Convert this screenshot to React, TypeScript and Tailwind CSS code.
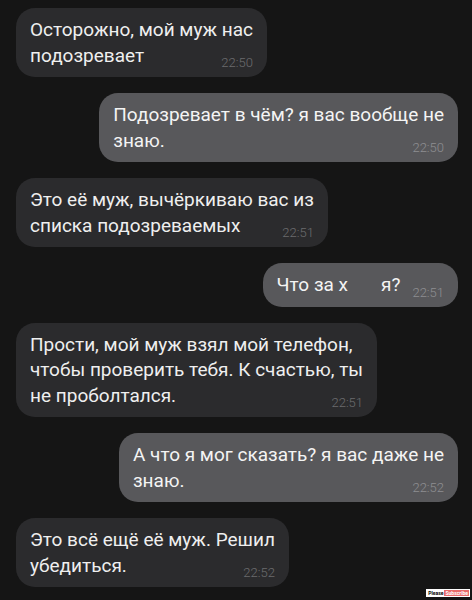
import React from 'react';

type Msg = {
    lines: string[];
    time: string;
    mine: boolean;
};

const messages: Msg[] = [
    { lines: ['Осторожно, мой муж нас', 'подозревает'], time: '22:50', mine: false },
    { lines: ['Подозревает в чём? я вас вообще не', 'знаю.'], time: '22:50', mine: true },
    { lines: ['Это её муж, вычёркиваю вас из', 'списка подозреваемых'], time: '22:51', mine: false },
    { lines: ['Что за х\u00a0\u00a0\u00a0\u00a0\u00a0\u00a0\u00a0я?'], time: '22:51', mine: true },
    { lines: ['Прости, мой муж взял мой телефон,', 'чтобы проверить тебя. К счастью, ты', 'не проболтался.'], time: '22:51', mine: false },
    { lines: ['А что я мог сказать? я вас даже не', 'знаю.'], time: '22:52', mine: true },
    { lines: ['Это всё ещё её муж. Решил', 'убедиться.'], time: '22:52', mine: false },
];

const Bubble: React.FC<{ msg: Msg }> = ({ msg }) => {
    const last = msg.lines[msg.lines.length - 1];
    const rest = msg.lines.slice(0, -1);
    return (
        <div
            className={
                msg.mine
                    ? 'self-end w-fit rounded-[19px] bg-[#58585b] text-[#f4f4f4] px-[14px] py-[9px]'
                    : 'self-start w-fit rounded-[19px] bg-[#2b2b2d] text-[#efefef] px-[14px] py-[9px]'
            }
        >
            {rest.map((l, i) => (
                <div key={i} className="whitespace-nowrap">{l}</div>
            ))}
            <div className="flex items-end whitespace-nowrap">
                <span>{last}</span>
                <span
                    className={
                        msg.mine
                            ? 'ml-auto pl-3 text-[13px] leading-[13px] font-light text-[#8e8e91] translate-y-[1px]'
                            : 'ml-auto pl-3 text-[13px] leading-[13px] font-light text-[#6c6c6e] translate-y-[1px]'
                    }
                >
                    {msg.time}
                </span>
            </div>
        </div>
    );
};

const App: React.FC = () => {
    return (
        <div
            className="relative w-[472px] h-[600px] overflow-hidden bg-[#151515] flex flex-col gap-4 pt-2 pl-4 pr-[14px] text-[19px] leading-[25.5px]"
            style={{ fontFamily: 'Roboto, "Noto Sans", sans-serif' }}
        >
            {messages.map((m, i) => (
                <Bubble key={i} msg={m} />
            ))}

            {/* водяной знак */}
            <div className="absolute right-[2px] bottom-[3px] flex items-center bg-white px-[1px] py-[1px] text-[5px] leading-[6px] font-bold">
                <span className="text-black px-[1px]">Please</span>
                <span className="bg-[#e86a6a] text-white px-[1px]">Subscribe</span>
            </div>
        </div>
    );
};

export default App;
